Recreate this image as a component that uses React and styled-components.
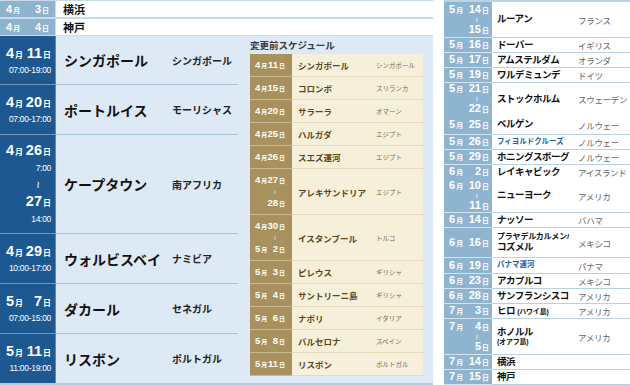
import styled, { createGlobalStyle } from "styled-components"

const GlobalStyle = createGlobalStyle`
  html, body {
    margin: 0;
    padding: 0;
    background: #fff;
  }
  body {
    font-family: "Liberation Sans", "Noto Sans CJK JP", sans-serif;
  }
`

const Page = styled.div`
  display: flex;
  gap: 11px;
  width: 630px;
  height: 385px;
  overflow: hidden;
`

/* ---------- left panel ---------- */

const LeftPanel = styled.section`
  width: 433px;
  display: flex;
  flex-direction: column;
  background: #c8dbe9;
  padding-top: 1px;
`

const TopList = styled.div`
  display: flex;
  flex-direction: column;
  gap: 2px;
  margin-bottom: 1px;
`

const TopRow = styled.div`
  display: grid;
  grid-template-columns: 55px 1fr;
  column-gap: 1px;
  height: 16px;
`

const TopDate = styled.div`
  background: #8db3ce;
  color: #fff;
  font-weight: 700;
  font-size: 11px;
  white-space: nowrap;
  display: flex;
  justify-content: space-between;
  align-items: center;
  padding: 0 6px 0 6px;
`

const TopPlace = styled.div`
  background: #fff;
  display: flex;
  align-items: center;
  padding-left: 7px;
  font-size: 11px;
  font-weight: 700;
  color: #111;
`

const Unit = styled.span`
  font-size: ${(p) => p.$size || 7}px;
  margin-left: 1px;
`

const Main = styled.div`
  flex: 1;
  display: flex;
  background: #dde9f5;
  border-bottom: 2px solid #b3cce0;
`

const MainList = styled.div`
  width: 238px;
  display: flex;
  flex-direction: column;
`

const MainRow = styled.div`
  display: grid;
  grid-template-columns: 56px 1fr;
  height: ${(p) => p.$h}px;
`

const BigDate = styled.div`
  background: #1d5891;
  color: #fff;
  border-right: 1px solid #5f89b4;
  border-bottom: ${(p) => (p.$last ? "none" : "1px solid #6f97bf")};
  display: flex;
  flex-direction: column;
  justify-content: center;
  padding: 0 4px 0 6px;
  font-weight: 700;
`

const DateLine = styled.div`
  display: flex;
  justify-content: ${(p) => (p.$end ? "flex-end" : "space-between")};
  align-items: baseline;
  white-space: nowrap;
  font-size: ${(p) => p.$size}px;
  line-height: ${(p) => p.$lh}px;
`

const Time = styled.div`
  text-align: right;
  white-space: nowrap;
  font-size: 8.5px;
  font-weight: 400;
  line-height: ${(p) => p.$lh || 13}px;
  letter-spacing: -0.3px;
`

const Tilde = styled.div`
  text-align: right;
  padding-right: ${(p) => p.$pr}px;
  font-family: "DejaVu Sans", sans-serif;
  font-size: ${(p) => p.$size}px;
  font-weight: 400;
  line-height: ${(p) => p.$lh}px;
`

const MainBody = styled.div`
  display: flex;
  align-items: center;
  padding-left: 8px;
  border-bottom: ${(p) => (p.$last ? "none" : "1px solid #a9c5dc")};
`

const MainCity = styled.div`
  width: 108px;
  font-size: 14px;
  font-weight: 700;
  white-space: nowrap;
  color: #111;
`

const MainCountry = styled.div`
  font-size: 10px;
  font-weight: 700;
  white-space: nowrap;
  color: #222;
`

/* ---------- old schedule ---------- */

const OldColumn = styled.div`
  flex: 1;
  padding: 3px 10px 0 12px;
`

const OldHeading = styled.h3`
  margin: 0 0 1px;
  font-size: 9.5px;
  font-weight: 700;
  line-height: 14px;
  color: #3a3a3a;
`

const OldTable = styled.div`
  display: flex;
  flex-direction: column;
`

const OldRow = styled.div`
  display: grid;
  grid-template-columns: 42px 1fr;
  height: ${(p) => p.$h}px;
`

const OldDate = styled.div`
  background: #a8915e;
  color: #fff;
  border-bottom: 1px solid #c6b68c;
  display: flex;
  flex-direction: column;
  justify-content: center;
  padding: 0 7px 0 5px;
  font-weight: 700;
`

const OldBody = styled.div`
  background: #f6efd9;
  border-bottom: 1px solid #e4d9bb;
  display: flex;
  align-items: center;
  padding-left: 6px;
`

const OldCity = styled.div`
  width: 78px;
  font-size: 8.5px;
  font-weight: 700;
  white-space: nowrap;
  color: #5a4520;
`

const OldCountry = styled.div`
  font-size: 6.5px;
  white-space: nowrap;
  color: #7d6c48;
`

/* ---------- right panel ---------- */

const RightPanel = styled.section`
  width: 186px;
  display: flex;
  flex-direction: column;
  border-top: 2px solid #bcd3e5;
  border-bottom: 1px solid #bcd3e5;
`

const RightRow = styled.div`
  display: grid;
  grid-template-columns: 48px 1fr;
  height: ${(p) => p.$h}px;
`

const RightDate = styled.div`
  background: #8fb4cf;
  color: #fff;
  border-bottom: 1px solid #d2e2ee;
  display: flex;
  flex-direction: column;
  justify-content: center;
  padding: 0 3px 0 5px;
  font-weight: 700;
`

const RightBody = styled.div`
  background: #fff;
  border-bottom: 1px solid #b9d0e2;
  display: flex;
  align-items: center;
  padding-left: 5px;
`

const RightCity = styled.div`
  width: 81px;
  flex-shrink: 0;
  white-space: nowrap;
  font-size: ${(p) => (p.$note ? 7.5 : 9.5)}px;
  letter-spacing: ${(p) => (p.$note ? 0 : -0.5)}px;
  font-weight: 700;
  color: ${(p) => (p.$note ? "#1f5ea3" : "#111")};
  line-height: 1.15;
`

const Small = styled.span`
  display: ${(p) => (p.$block ? "block" : "inline")};
  font-size: ${(p) => p.$size}px;
  letter-spacing: -0.2px;
`

const RightCountry = styled.div`
  font-size: 8.5px;
  white-space: nowrap;
  letter-spacing: -0.3px;
  color: #666;
`

/* ---------- data ---------- */

const mainRows = [
  { m: 4, d: 11, t: "07:00-19:00", city: "シンガポール", country: "シンガポール", h: 49 },
  { m: 4, d: 20, t: "07:00-17:00", city: "ポートルイス", country: "モーリシャス", h: 50 },
  { m: 4, d: 26, t: "7:00", d2: 27, t2: "14:00", city: "ケープタウン", country: "南アフリカ", h: 99 },
  { m: 4, d: 29, t: "10:00-17:00", city: "ウォルビスベイ", country: "ナミビア", h: 50 },
  { m: 5, d: 7, t: "07:00-15:00", city: "ダカール", country: "セネガル", h: 50 },
  { m: 5, d: 11, t: "11:00-19:00", city: "リスボン", country: "ポルトガル", h: 49 },
]

const oldRows = [
  { m: 4, d: 11, city: "シンガポール", country: "シンガポール" },
  { m: 4, d: 15, city: "コロンボ", country: "スリランカ" },
  { m: 4, d: 20, city: "サラーラ", country: "オマーン" },
  { m: 4, d: 25, city: "ハルガダ", country: "エジプト" },
  { m: 4, d: 26, city: "スエズ運河", country: "エジプト" },
  { m: 4, d: 27, d2: 28, city: "アレキサンドリア", country: "エジプト" },
  { m: 4, d: 30, m2: 5, d2: 2, city: "イスタンブール", country: "トルコ" },
  { m: 5, d: 3, city: "ピレウス", country: "ギリシャ" },
  { m: 5, d: 4, city: "サントリーニ島", country: "ギリシャ" },
  { m: 5, d: 6, city: "ナポリ", country: "イタリア" },
  { m: 5, d: 8, city: "バルセロナ", country: "スペイン" },
  { m: 5, d: 11, city: "リスボン", country: "ポルトガル" },
]

const rightRows = [
  { m: 5, d: 14, d2: 15, city: "ルーアン", country: "フランス", h: 36 },
  { m: 5, d: 16, city: "ドーバー", country: "イギリス", h: 15 },
  { m: 5, d: 17, city: "アムステルダム", country: "オランダ", h: 15 },
  { m: 5, d: 19, city: "ワルデミュンデ", country: "ドイツ", h: 15 },
  { m: 5, d: 21, d2: 22, city: "ストックホルム", country: "スウェーデン", h: 32 },
  { m: 5, d: 25, city: "ベルゲン", country: "ノルウェー", h: 20 },
  { m: 5, d: 26, city: "フィヨルドクルーズ", note: true, country: "ノルウェー", h: 15 },
  { m: 5, d: 29, city: "ホニングスボーグ", country: "ノルウェー", h: 15 },
  { m: 6, d: 2, city: "レイキャビック", country: "アイスランド", h: 14 },
  { m: 6, d: 10, d2: 11, city: "ニューヨーク", country: "アメリカ", h: 34 },
  { m: 6, d: 14, city: "ナッソー", country: "バハマ", h: 15 },
  {
    m: 6, d: 16, h: 30, country: "メキシコ",
    city: (
      <>
        <Small $block $size={8}>プラヤデルカルメン/</Small>
        コズメル
      </>
    ),
  },
  { m: 6, d: 19, city: "パナマ運河", note: true, country: "パナマ", h: 16 },
  { m: 6, d: 23, city: "アカプルコ", country: "メキシコ", h: 15 },
  { m: 6, d: 28, city: "サンフランシスコ", country: "アメリカ", h: 15 },
  {
    m: 7, d: 3, h: 15, country: "アメリカ",
    city: (
      <>
        ヒロ <Small $size={7}>(ハワイ島)</Small>
      </>
    ),
  },
  {
    m: 7, d: 4, d2: 5, h: 36, country: "アメリカ",
    city: (
      <>
        ホノルル
        <Small $block $size={7}>(オアフ島)</Small>
      </>
    ),
  },
  { m: 7, d: 14, city: "横浜", h: 15 },
  { m: 7, d: 15, city: "神戸", h: 14 },
]

function MonthDay({ m, d, size, unit, lh }) {
  return (
    <DateLine $size={size} $lh={lh}>
      <span>
        {m}
        <Unit $size={unit}>月</Unit>
      </span>
      <span>
        {d}
        <Unit $size={unit}>日</Unit>
      </span>
    </DateLine>
  )
}

function DayOnly({ d, size, unit, lh }) {
  return (
    <DateLine $end $size={size} $lh={lh}>
      <span>
        {d}
        <Unit $size={unit}>日</Unit>
      </span>
    </DateLine>
  )
}

export default function App() {
  return (
    <>
      <GlobalStyle />
      <Page>
        <LeftPanel>
          <TopList>
            <TopRow>
              <TopDate>
                <span>4<Unit $size={7}>月</Unit></span>
                <span>3<Unit $size={7}>日</Unit></span>
              </TopDate>
              <TopPlace>横浜</TopPlace>
            </TopRow>
            <TopRow>
              <TopDate>
                <span>4<Unit $size={7}>月</Unit></span>
                <span>4<Unit $size={7}>日</Unit></span>
              </TopDate>
              <TopPlace>神戸</TopPlace>
            </TopRow>
          </TopList>

          <Main>
            <MainList>
              {mainRows.map((r, i) => {
                const last = i === mainRows.length - 1
                return (
                  <MainRow key={i} $h={r.h}>
                    <BigDate $last={last}>
                      <MonthDay m={r.m} d={r.d} size={14.5} unit={8} lh={17} />
                      <Time $lh={r.d2 ? 15 : 12}>{r.t}</Time>
                      {r.d2 && (
                        <>
                          <Tilde $pr={11} $size={10} $lh={17}>≀</Tilde>
                          <DayOnly d={r.d2} size={14.5} unit={8} lh={17} />
                          <Time $lh={15}>{r.t2}</Time>
                        </>
                      )}
                    </BigDate>
                    <MainBody $last={last}>
                      <MainCity>{r.city}</MainCity>
                      <MainCountry>{r.country}</MainCountry>
                    </MainBody>
                  </MainRow>
                )
              })}
            </MainList>

            <OldColumn>
              <OldHeading>変更前スケジュール</OldHeading>
              <OldTable>
                {oldRows.map((r, i) => (
                  <OldRow key={i} $h={r.d2 ? 46 : 23}>
                    <OldDate>
                      <MonthDay m={r.m} d={r.d} size={9.5} unit={6} lh={11} />
                      {r.d2 && (
                        <>
                          <Tilde $pr={9} $size={6} $lh={10}>≀</Tilde>
                          {r.m2 ? (
                            <MonthDay m={r.m2} d={r.d2} size={9.5} unit={6} lh={11} />
                          ) : (
                            <DayOnly d={r.d2} size={9.5} unit={6} lh={11} />
                          )}
                        </>
                      )}
                    </OldDate>
                    <OldBody>
                      <OldCity>{r.city}</OldCity>
                      <OldCountry>{r.country}</OldCountry>
                    </OldBody>
                  </OldRow>
                ))}
              </OldTable>
            </OldColumn>
          </Main>
        </LeftPanel>

        <RightPanel>
          {rightRows.map((r, i) => (
            <RightRow key={i} $h={r.h}>
              <RightDate>
                <MonthDay m={r.m} d={r.d} size={11} unit={7} lh={r.d2 ? 11 : 13} />
                {r.d2 && (
                  <>
                    <Tilde $pr={11} $size={7} $lh={8}>≀</Tilde>
                    <DayOnly d={r.d2} size={11} unit={7} lh={11} />
                  </>
                )}
              </RightDate>
              <RightBody>
                <RightCity $note={r.note}>{r.city}</RightCity>
                {r.country && <RightCountry>{r.country}</RightCountry>}
              </RightBody>
            </RightRow>
          ))}
        </RightPanel>
      </Page>
    </>
  )
}
